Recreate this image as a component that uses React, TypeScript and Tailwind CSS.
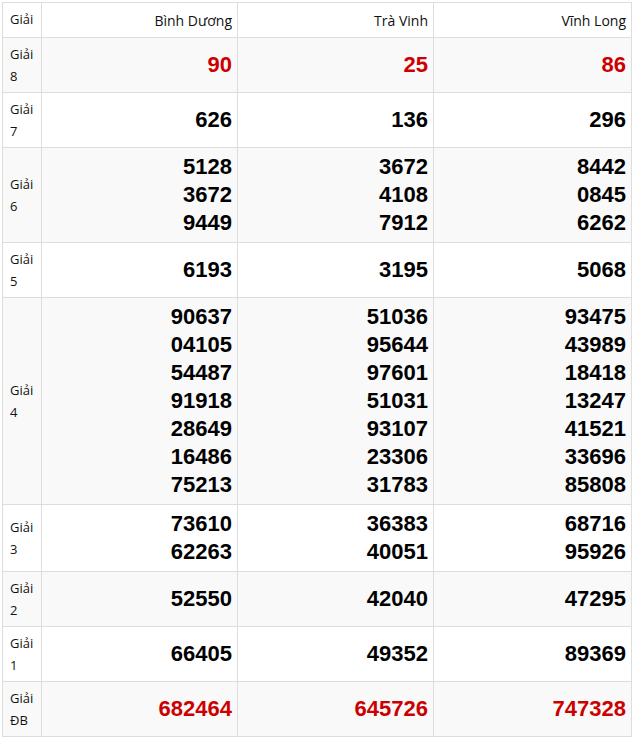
const provinces = ['Bình Dương', 'Trà Vinh', 'Vĩnh Long']

const rows: { label: string[]; red?: boolean; values: string[][] }[] = [
  { label: ['Giải', '8'], red: true, values: [['90'], ['25'], ['86']] },
  { label: ['Giải', '7'], values: [['626'], ['136'], ['296']] },
  { label: ['Giải', '6'], values: [['5128', '3672', '9449'], ['3672', '4108', '7912'], ['8442', '0845', '6262']] },
  { label: ['Giải', '5'], values: [['6193'], ['3195'], ['5068']] },
  {
    label: ['Giải', '4'],
    values: [
      ['90637', '04105', '54487', '91918', '28649', '16486', '75213'],
      ['51036', '95644', '97601', '51031', '93107', '23306', '31783'],
      ['93475', '43989', '18418', '13247', '41521', '33696', '85808'],
    ],
  },
  { label: ['Giải', '3'], values: [['73610', '62263'], ['36383', '40051'], ['68716', '95926']] },
  { label: ['Giải', '2'], values: [['52550'], ['42040'], ['47295']] },
  { label: ['Giải', '1'], values: [['66405'], ['49352'], ['89369']] },
  { label: ['Giải', 'ĐB'], red: true, values: [['682464'], ['645726'], ['747328']] },
]

export default function App() {
  return (
    <div className="bg-white min-h-[738px] pt-[2px] pl-[2px]" style={{ fontFamily: '"Open Sans", "Noto Sans", sans-serif' }}>
      <table className="w-[629px] table-fixed border-collapse border border-[#dddddd] text-[#111]">
        <colgroup>
          <col className="w-[39px]" />
          <col className="w-[196px]" />
          <col className="w-[196px]" />
          <col className="w-[198px]" />
        </colgroup>
        <thead>
          <tr className="h-[35px]">
            <th className="border border-[#dddddd] pl-[7px] text-left text-[13px] font-normal">Giải</th>
            {provinces.map((p) => (
              <th key={p} className="border border-[#dddddd] pr-[5px] text-right text-[14px] font-normal">{p}</th>
            ))}
          </tr>
        </thead>
        <tbody>
          {rows.map((r, i) => (
            <tr key={r.label[1]} className={i % 2 === 0 ? 'bg-[#f9f9f9]' : 'bg-white'}>
              <td className="border border-[#dddddd] py-[5px] pl-[7px] align-middle text-[13px] leading-[22px]">
                {r.label.map((l) => <div key={l}>{l}</div>)}
              </td>
              {r.values.map((col, j) => (
                <td key={j} className="border border-[#dddddd] py-[5px] pr-[5px] text-right align-middle">
                  {col.map((n, k) => (
                    <div
                      key={k}
                      className={`text-[22px] leading-[28px] font-bold ${r.red ? 'text-[#cc0000]' : 'text-black'}`}
                      style={{ fontFamily: '"Liberation Sans", Arial, sans-serif' }}
                    >
                      {n}
                    </div>
                  ))}
                </td>
              ))}
            </tr>
          ))}
        </tbody>
      </table>
    </div>
  )
}
